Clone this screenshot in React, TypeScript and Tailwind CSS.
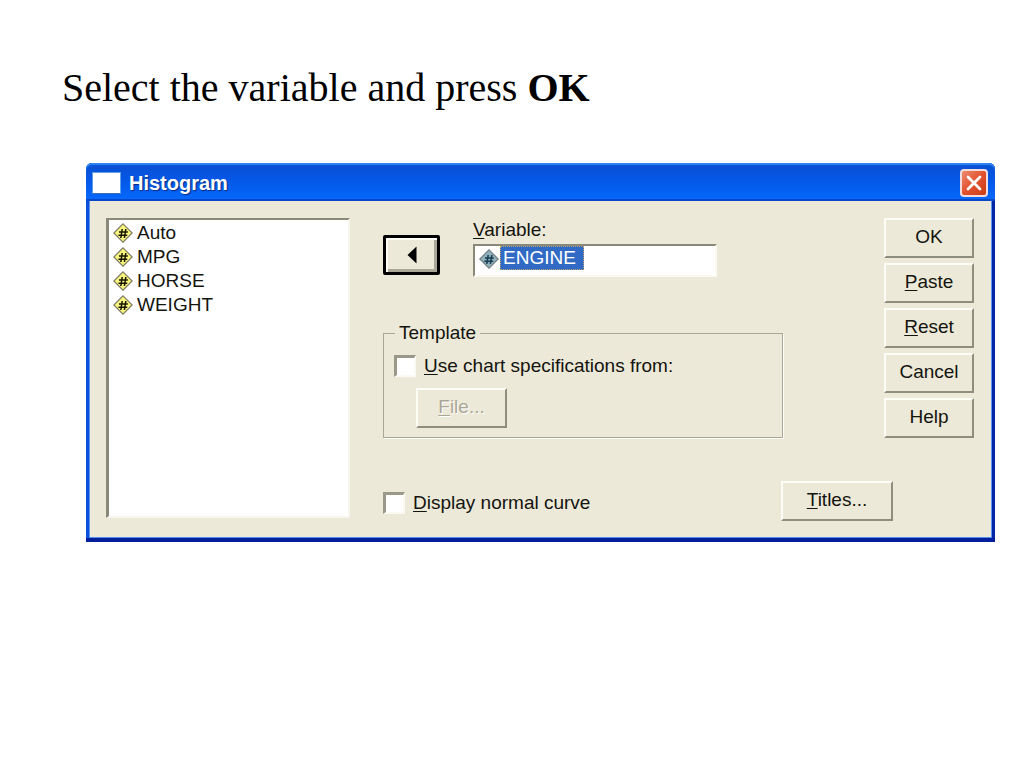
import type { ReactNode } from 'react'

const variables = ['Auto', 'MPG', 'HORSE', 'WEIGHT']

const actions = [
  { name: 'OK', label: <>OK</> },
  { name: 'Paste', label: <><Key>P</Key>aste</> },
  { name: 'Reset', label: <><Key>R</Key>eset</> },
  { name: 'Cancel', label: <>Cancel</> },
  { name: 'Help', label: <>Help</> },
]

// Keyboard mnemonic inside a label
function Key({ children }: { children: ReactNode }) {
  return <span className="underline decoration-1 underline-offset-2">{children}</span>
}

interface ButtonProps {
  children: ReactNode
  className?: string
  disabled?: boolean
}

function Button({ children, className = '', disabled }: ButtonProps) {
  return (
    <button
      type="button"
      disabled={disabled}
      className={`h-10 pb-0.5 flex items-center justify-center border-2 border-t-[#fdfdf8] border-l-[#fdfdf8] border-r-[#8f8d7c] border-b-[#8f8d7c] bg-[#ece9d8] ${className}`}
    >
      {children}
    </button>
  )
}

function Checkbox({ id, children }: { id: string; children: ReactNode }) {
  return (
    <div className="flex items-center gap-2">
      <input
        id={id}
        type="checkbox"
        className="appearance-none shrink-0 w-[22px] h-[22px] bg-white border-t-3 border-l-3 border-r-2 border-b-2 border-t-[#9a9888] border-l-[#9a9888] border-r-[#faf9f3] border-b-[#faf9f3] checked:bg-[#316ac5]"
      />
      <label htmlFor={id} className="whitespace-nowrap">{children}</label>
    </div>
  )
}

function VariableIcon({ selected = false }: { selected?: boolean }) {
  return (
    <svg viewBox="0 0 20 20" className="w-5 h-5 shrink-0" aria-hidden="true">
      <path
        d="M10 0.8 L19.2 10 L10 19.2 L0.8 10 Z"
        fill={selected ? '#8fb0bb' : '#f8f57c'}
        stroke={selected ? '#747f84' : '#7d7c66'}
        strokeWidth="1.2"
      />
      <path
        d="M9.2 6 L7.8 15 M12.8 6 L11.4 15 M6 9 H14.8 M5.4 12.2 H14.2"
        fill="none"
        stroke={selected ? '#173a50' : '#161600'}
        strokeWidth="1.5"
      />
    </svg>
  )
}

function TitleBar() {
  return (
    <header className="h-[38px] pl-[6px] pr-[7px] flex items-center justify-between rounded-t-md bg-linear-to-b from-[#0a4fd0] via-[#0458e8] to-[#0668fb] border-b-2 border-b-[#0648c8] shadow-[inset_0_2px_1px_#2f86f5]">
      <div className="flex items-center gap-2 pt-1">
        <div className="w-[29px] h-[22px] bg-white border border-[#5da0e8] border-b-[#3c6fb8]" />
        <h2 className="text-[20px] leading-6 font-bold text-white [text-shadow:1px_1px_1px_#0a2a80]">Histogram</h2>
      </div>
      <button
        type="button"
        aria-label="Close"
        className="w-7 h-7 mt-1 flex items-center justify-center rounded border-2 border-[#f3dcdc] bg-linear-to-br from-[#ea8a6c] via-[#e2512e] to-[#c93c14]"
      >
        <svg viewBox="0 0 18 18" className="w-[18px] h-[18px]" aria-hidden="true">
          <path d="M3 3 L15 15 M15 3 L3 15" fill="none" stroke="#fff" strokeWidth="2.8" strokeLinecap="round" />
        </svg>
      </button>
    </header>
  )
}

function VariableList() {
  return (
    <ul
      role="listbox"
      aria-label="Variables"
      className="w-[244px] shrink-0 mb-[3px] pl-1 pt-px bg-white border-t-2 border-l-3 border-r-2 border-b-2 border-t-[#8a8878] border-l-[#8a8878] border-r-[#f7f6ee] border-b-[#f7f6ee]"
    >
      {variables.map((name) => (
        <li key={name} role="option" aria-selected={false} className="h-6 flex items-center gap-1">
          <VariableIcon />
          {name}
        </li>
      ))}
    </ul>
  )
}

function VariableField() {
  return (
    <div className="flex items-start">
      <button
        type="button"
        aria-label="Move variable"
        className="w-[57px] h-10 mt-[17px] mr-[33px] shrink-0 flex items-center justify-center rounded-xs border-3 border-black bg-[#ece9d8] shadow-[inset_2px_2px_0_#fdfdf8,inset_-3px_-3px_0_#aaa797]"
      >
        <svg viewBox="0 0 10 18" className="w-[10px] h-[18px]" aria-hidden="true">
          <path d="M9.5 0.5 V17.5 L0.5 9 Z" fill="#000" />
        </svg>
      </button>
      <div className="w-[244px]">
        <label htmlFor="variable" className="block h-[26px] leading-6">
          <Key>V</Key>ariable:
        </label>
        <div className="h-[33px] pl-1 flex items-start bg-white border-2 border-t-[#8a8878] border-l-[#8a8878] border-r-[#faf9f3] border-b-[#faf9f3]">
          <div className="pt-[3px]">
            <VariableIcon selected />
          </div>
          <input
            id="variable"
            type="text"
            readOnly
            value="ENGINE"
            className="w-[84px] h-6 ml-px pl-0.5 pb-px border border-dotted border-[#c5a36a] bg-[#316ac5] text-white outline-none"
          />
        </div>
      </div>
    </div>
  )
}

export default function App() {
  return (
    <main className="bg-white pt-16 pb-10">
      <h1 className="ml-[62px] mr-8 font-['Liberation_Serif',serif] text-[40px] leading-[48px] text-black">
        Select the variable and press <strong>OK</strong>
      </h1>

      <section className="mt-[51px] ml-[86px] mr-[29px] rounded-t-md bg-linear-to-r from-[#0b50dc] to-[#0426a4] font-['Liberation_Sans',sans-serif] text-[19px] leading-6 text-[#14140f]">
        <TitleBar />

        <div className="mx-[3px] border-x border-b border-x-[#5b96ee] border-b-[#4f8ff0] bg-[#ece9d8] flex gap-[33px] pt-[17px] pb-4 pl-4 pr-[17px]">
          <VariableList />

          <div className="flex-1 min-w-0">
            <div className="flex justify-between">
              <div className="w-[400px]">
                <VariableField />

                {/* Chart template */}
                <fieldset className="mt-11 h-[117px] px-[10px] border border-[#aaa797] shadow-[1px_1px_0_#fdfdf8]">
                  <legend className="ml-px px-1 leading-6">Template</legend>
                  <div className="pt-[9px]">
                    <Checkbox id="use-template">
                      <Key>U</Key>se chart specifications from:
                    </Checkbox>
                  </div>
                  <Button disabled className="w-[91px] ml-[22px] mt-[10px] text-[#aaa797] [text-shadow:1px_1px_0_#fff]">
                    <span><Key>F</Key>ile...</span>
                  </Button>
                </fieldset>
              </div>

              <div className="w-[90px] shrink-0 flex flex-col gap-[5px]">
                {actions.map((action) => (
                  <Button key={action.name} className="w-full">
                    <span>{action.label}</span>
                  </Button>
                ))}
              </div>
            </div>

            <div className="mt-[43px] mr-[81px] flex items-center justify-between">
              <div className="pt-1">
                <Checkbox id="normal-curve">
                  <Key>D</Key>isplay normal curve
                </Checkbox>
              </div>
              <Button className="w-28">
                <span><Key>T</Key>itles...</span>
              </Button>
            </div>
          </div>
        </div>

        <div className="h-1 bg-[#001f9c]" />
      </section>
    </main>
  )
}
